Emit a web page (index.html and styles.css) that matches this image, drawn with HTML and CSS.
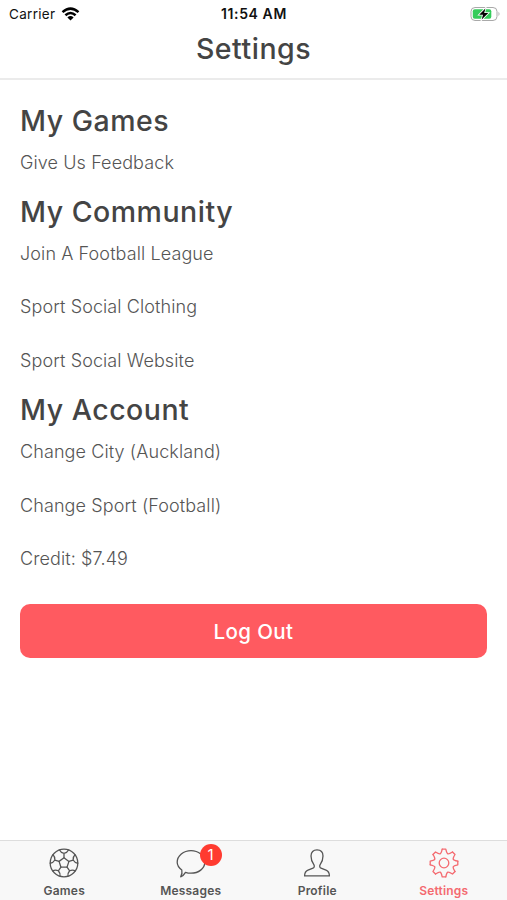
FILE: index.html
```html
<!DOCTYPE html>
<html lang="en">
<head>
    <meta charset="UTF-8">
    <meta name="viewport" content="width=device-width, initial-scale=1.0">
    <title>Settings</title>
    <link rel="stylesheet" href="styles.css">
</head>
<body>
    <div class="status-bar">
        <div class="carrier">
            <span>Carrier</span>
            <svg width="19" height="14" viewBox="0 0 18 14" fill="none" stroke="#000" stroke-width="2.5">
                <path d="M1 5.1Q9-1.9 17 5.1"/>
                <path d="M3.9 8.2Q9 3.7 14.1 8.2"/>
                <path d="M9 13.5L5.9 10.4Q9 7.8 12.1 10.4Z" fill="#000" stroke="none"/>
            </svg>
        </div>
        <div class="clock">11:54 AM</div>
        <svg class="battery" width="31" height="16" viewBox="0 0 31 16">
            <rect x="1" y="1.5" width="26" height="13" rx="4" fill="#fff" stroke="#a9a9a9"/>
            <rect x="2.8" y="3.3" width="18.5" height="9.4" rx="2" fill="#35cc5b"/>
            <path d="M28.5 5.8Q30.5 8 28.5 10.2Z" fill="#a9a9a9"/>
            <path d="M15.4 2.4L9.2 8.8H13L11.7 13.6L18.3 7H14.2Z" fill="#000" stroke="#fff" stroke-width="1.6" paint-order="stroke"/>
        </svg>
    </div>
    <header>
        <h1>Settings</h1>
    </header>

    <main>
        <h2>My Games</h2>
        <ul>
            <li>Give Us Feedback</li>
        </ul>
        <h2>My Community</h2>
        <ul>
            <li>Join A Football League</li>
            <li>Sport Social Clothing</li>
            <li>Sport Social Website</li>
        </ul>
        <h2>My Account</h2>
        <ul>
            <li>Change City (Auckland)</li>
            <li>Change Sport (Football)</li>
            <li>Credit: $7.49</li>
        </ul>
        <button class="logout">Log Out</button>
    </main>

    <nav>
        <div class="tab">
            <svg width="30" height="30" viewBox="-15 -15 30 30">
                <defs>
                    <path id="seam" d="M-4.5-13Q-3.2-10.3 0-9.6Q3.2-10.3 4.5-13M0-9.6V-5.2L4.9-1.6"/>
                </defs>
                <circle r="13.8"/>
                <use href="#seam"/>
                <use href="#seam" transform="rotate(72)"/>
                <use href="#seam" transform="rotate(144)"/>
                <use href="#seam" transform="rotate(216)"/>
                <use href="#seam" transform="rotate(288)"/>
            </svg>
            <span>Games</span>
        </div>
        <div class="tab">
            <div class="icon">
                <svg width="30" height="30" viewBox="0 0 30 30">
                    <path d="M5.8 22.1C3.2 20.1 1.2 17.6 1.2 14.3C1.2 8 7.5 2.6 15 2.6S28.8 8 28.8 14.3S22.5 25.2 15 25.2C12.9 25.2 11.2 24.9 9.5 24.3C8.1 26.6 6.8 28.1 4.7 28.8C6 26.4 6.4 24.6 5.8 22.1Z"/>
                </svg>
                <span class="badge">1</span>
            </div>
            <span>Messages</span>
        </div>
        <div class="tab">
            <svg width="30" height="30" viewBox="0 0 30 30">
                <path d="M2.6 27.9C2.6 24.7 3.5 23.1 6 22.1L11 20.1C12.5 19.5 12.6 17.8 11.7 16.4C10 14 9 12 9 8C9 4.2 11.3 1.8 15 1.8S21 4.2 21 8C21 12 20 14 18.3 16.4C17.4 17.8 17.5 19.5 19 20.1L24 22.1C26.5 23.1 27.4 24.7 27.4 27.9Z"/>
            </svg>
            <span>Profile</span>
        </div>
        <div class="tab active">
            <svg width="30" height="30" viewBox="-15 -15 30 30">
                <defs>
                    <path id="tooth" d="M-1.8-13.8H1.8C3-8.3 3.7-8 8.5-11"/>
                </defs>
                <circle r="4.8"/>
                <use href="#tooth"/>
                <use href="#tooth" transform="rotate(45)"/>
                <use href="#tooth" transform="rotate(90)"/>
                <use href="#tooth" transform="rotate(135)"/>
                <use href="#tooth" transform="rotate(180)"/>
                <use href="#tooth" transform="rotate(225)"/>
                <use href="#tooth" transform="rotate(270)"/>
                <use href="#tooth" transform="rotate(315)"/>
            </svg>
            <span>Settings</span>
        </div>
    </nav>
</body>
</html>
```
FILE: styles.css
```css
* {
    box-sizing: border-box;
}
body {
    margin: 0;
    height: 100vh;
    display: flex;
    flex-direction: column;
    background: #fff;
    color: #444;
    font-family: Inter, "Liberation Sans", sans-serif;
}
.status-bar {
    display: grid;
    grid-template-columns: 1fr auto 1fr;
    align-items: center;
    height: 27px;
    padding: 0 6px 0 9px;
    color: #111;
    font-size: 14px;
}
.carrier {
    display: flex;
    align-items: center;
    gap: 6px;
    font-size: 13.5px;
    letter-spacing: 0.3px;
}
.clock {
    padding-right: 2px;
    font-weight: 600;
    letter-spacing: 0.6px;
}
.battery {
    justify-self: end;
}
header {
    height: 53px;
    border-bottom: 2px solid #ebebeb;
    text-align: center;
}
h1, h2 {
    margin: 0;
    font-size: 28.5px;
    font-weight: 500;
    line-height: 36px;
    letter-spacing: 0.5px;
}
h1 {
    padding-top: 4px;
}
main {
    flex: 1;
    padding: 23px 20px 0;
}
h2 {
    height: 36.8px;
    font-weight: 550;
}
ul {
    margin: 0;
    padding: 0;
    list-style: none;
}
li {
    height: 53.8px;
    padding-top: 11.2px;
    color: #555;
    font-size: 18px;
    font-weight: 300;
    line-height: 24px;
    letter-spacing: 0.1px;
}
.logout {
    display: block;
    width: 100%;
    height: 54px;
    margin-top: 14px;
    padding-top: 2px;
    border: 0;
    border-radius: 10px;
    background: #ff5a60;
    color: #fff;
    font-family: inherit;
    font-size: 20.5px;
    font-weight: 500;
    letter-spacing: 0.4px;
}
nav {
    display: grid;
    grid-template-columns: repeat(4, 1fr);
    height: 60px;
    padding-left: 1px;
    border-top: 1px solid #ddd;
    background: #f8f8f8;
}
.tab {
    display: flex;
    flex-direction: column;
    align-items: center;
    padding-top: 7px;
    color: #555;
    font-size: 12px;
    font-weight: 600;
    line-height: 16px;
    letter-spacing: 0.2px;
}
.tab svg {
    display: block;
    margin-bottom: 5px;
    fill: none;
    stroke: currentColor;
    stroke-width: 1.3;
    stroke-linecap: round;
    stroke-linejoin: round;
}
.icon {
    position: relative;
}
.badge {
    position: absolute;
    top: -4px;
    left: 24px;
    width: 22px;
    height: 22px;
    border-radius: 50%;
    background: #ff3b30;
    color: #fff;
    font-size: 15px;
    font-weight: 400;
    line-height: 22px;
    text-align: center;
}
.active {
    color: #f46a70;
}
```
